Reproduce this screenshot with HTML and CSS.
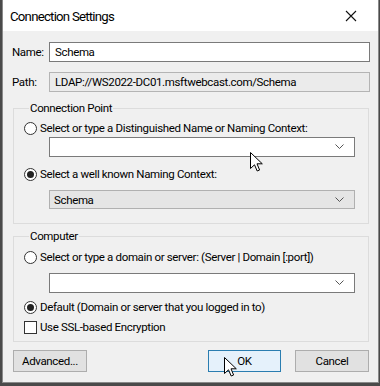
FILE: index.html
```html
<!DOCTYPE html>
<html lang="en">
<head>
<meta charset="UTF-8">
<title>Connection Settings</title>
<link rel="stylesheet" href="styles.css">
</head>
<body>
<div class="window">
  <div class="titlebar">
    <span class="title">Connection Settings</span>
    <svg class="close" width="12" height="12" viewBox="0 0 12 12"><path d="M1 1 L11 11 M11 1 L1 11" stroke="#111" stroke-width="1.1" fill="none"/></svg>
  </div>

  <div class="content">
    <div class="field-row">
      <label class="field-label">Name:</label>
      <div class="textbox">Schema</div>
    </div>
    <div class="field-row path-row">
      <label class="field-label">Path:</label>
      <div class="textbox readonly">LDAP://WS2022-DC01.msftwebcast.com/Schema</div>
    </div>

    <!-- Connection point group -->
    <fieldset class="group group-conn">
      <legend>Connection Point</legend>
      <div class="option first">
        <span class="radio"></span>
        <span>Select or type a Distinguished Name or Naming Context:</span>
      </div>
      <div class="combo">
        <span class="combo-text"></span>
        <svg class="chev" width="9" height="6" viewBox="0 0 9 6"><path d="M0.5 0.5 L4.5 4.5 L8.5 0.5" stroke="#555" fill="none"/></svg>
      </div>
      <div class="option second">
        <span class="radio checked"></span>
        <span>Select a well known Naming Context:</span>
      </div>
      <div class="combo disabled">
        <span class="combo-text">Schema</span>
        <svg class="chev" width="9" height="6" viewBox="0 0 9 6"><path d="M0.5 0.5 L4.5 4.5 L8.5 0.5" stroke="#555" fill="none"/></svg>
      </div>
    </fieldset>

    <!-- Computer group -->
    <fieldset class="group group-comp">
      <legend>Computer</legend>
      <div class="option first">
        <span class="radio"></span>
        <span>Select or type a domain or server: (Server | Domain [:port])</span>
      </div>
      <div class="combo">
        <span class="combo-text"></span>
        <svg class="chev" width="9" height="6" viewBox="0 0 9 6"><path d="M0.5 0.5 L4.5 4.5 L8.5 0.5" stroke="#555" fill="none"/></svg>
      </div>
      <div class="option default-opt">
        <span class="radio checked"></span>
        <span>Default (Domain or server that you logged in to)</span>
      </div>
      <div class="option ssl-opt">
        <span class="checkbox"></span>
        <span>Use SSL-based Encryption</span>
      </div>
    </fieldset>

    <div class="buttons">
      <button class="btn">Advanced...</button>
      <div class="spacer"></div>
      <button class="btn primary">OK</button>
      <button class="btn">Cancel</button>
    </div>
  </div>

  <!-- mouse pointers from the capture -->
  <svg class="cursor cursor-a" width="14" height="21" viewBox="0 0 14 21"><path d="M0.5 0.5 L0.5 16.5 L4.5 12.8 L7.2 19 L9.6 18 L7 11.8 L12.3 11.8 Z" fill="#fff" stroke="#000" stroke-width="1"/></svg>
  <svg class="cursor cursor-b" width="14" height="21" viewBox="0 0 14 21"><path d="M0.5 0.5 L0.5 16.5 L4.5 12.8 L7.2 19 L9.6 18 L7 11.8 L12.3 11.8 Z" fill="#fff" stroke="#000" stroke-width="1"/></svg>
</div>
</body>
</html>
```

FILE: styles.css
```css
/* Page */
body {
  margin: 0;
  background-color: #4a4a4a;
  font-family: Roboto, "Noto Sans", sans-serif;
  font-size: 11.5px;
  letter-spacing: -0.35px;
  color: #000;
}

/* Dialog window */
.window {
  position: relative;
  width: 375px;
  margin-left: 2px;
  background-color: #f0f0f0;
  border: 1px solid #8a8a8a;
  border-top: none;
}

.titlebar {
  height: 31px;
  background-color: #fff;
  display: flex;
  align-items: center;
  padding-left: 7px;
  padding-right: 21px;
}

.title {
  flex: 1;
  font-size: 13.2px;
  letter-spacing: -0.75px;
  padding-top: 1px;
}

.close {
  display: block;
}

.content {
  padding: 11px 9px 10px 10px;
}

/* Name / path rows */
.field-row {
  display: flex;
  align-items: center;
  height: 20px;
  margin-left: -1px;
}

.path-row {
  margin-top: 10px;
}

.field-label {
  width: 37px;
}

.textbox {
  flex: 1;
  box-sizing: border-box;
  height: 20px;
  line-height: 18px;
  padding-left: 5px;
  background-color: #fff;
  border: 1px solid #7a7a7a;
  margin-right: -1px;
}

.textbox.readonly {
  background-color: #ebebeb;
  border-color: #b4b4b4;
}

/* Group boxes */
.group {
  margin: 8px 0 0 0;
  padding: 4px 0 14px 10px;
  border: 1px solid #dcdcdc;
  min-width: 0;
}

.group legend {
  margin-left: 5px;
  padding: 0 1px;
  line-height: 16px;
}

.group-comp {
  margin-top: 4px;
  padding-top: 5px;
  padding-bottom: 6px;
}

.option {
  display: flex;
  align-items: center;
  height: 16px;
  white-space: nowrap;
}

.option.second {
  margin-top: 9px;
}

.default-opt {
  margin-top: 6px;
}

.ssl-opt {
  margin-top: 4px;
}

.radio {
  position: relative;
  box-sizing: border-box;
  width: 13px;
  height: 13px;
  margin-right: 3px;
  border: 1px solid #333;
  border-radius: 50%;
  background-color: #fff;
}

.radio.checked::after {
  content: "";
  position: absolute;
  left: 2px;
  top: 2px;
  width: 7px;
  height: 7px;
  border-radius: 50%;
  background-color: #222;
}

.checkbox {
  box-sizing: border-box;
  width: 13px;
  height: 13px;
  margin-right: 3px;
  border: 1px solid #333;
  background-color: #fff;
}

/* Combo boxes */
.combo {
  display: flex;
  align-items: center;
  box-sizing: border-box;
  width: 306px;
  height: 20px;
  margin: 1px 0 0 25px;
  padding: 0 10px 0 4px;
  background-color: #fff;
  border: 1px solid #7a7a7a;
}

.group-comp .combo {
  margin-top: 8px;
}

.combo.disabled {
  margin-top: 8px;
  height: 19px;
  background-color: #e5e5e5;
  border-color: #b0b0b0;
}

.combo-text {
  flex: 1;
}

.chev {
  display: block;
}

/* Bottom buttons */
.buttons {
  display: flex;
  margin-top: 8px;
}

.spacer {
  flex: 1;
}

.btn {
  box-sizing: border-box;
  width: 74px;
  height: 22px;
  padding: 0;
  font-family: inherit;
  font-size: 11.5px;
  letter-spacing: -0.35px;
  color: #000;
  background-color: #e1e1e1;
  border: 1px solid #adadad;
}

.btn.primary {
  width: 73px;
  margin-right: 14px;
  background-color: #e5f1fb;
  border-color: #2a7db0;
}

/* Pointers over the dialog */
.cursor {
  position: absolute;
}

.cursor-a {
  left: 247px;
  top: 152px;
}

.cursor-b {
  left: 221px;
  top: 357px;
}
```
